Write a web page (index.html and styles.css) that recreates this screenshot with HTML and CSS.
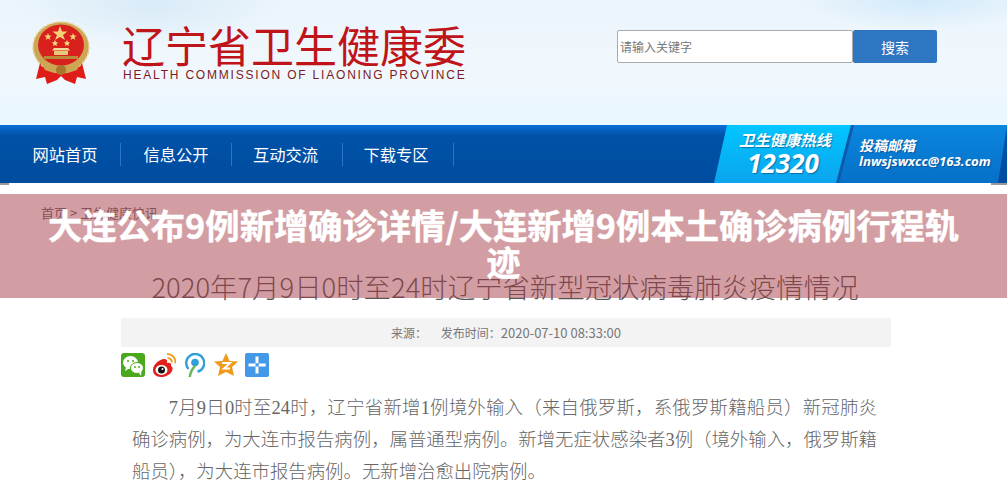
FILE: index.html
```html
<!DOCTYPE html>
<html lang="zh-CN">
<head>
    <meta charset="UTF-8">
    <title>2020年7月9日0时至24时辽宁省新型冠状病毒肺炎疫情情况</title>
    <link rel="stylesheet" href="styles.css">
</head>
<body>
    <div class="header">
        <svg class="emblem" viewBox="0 0 60 64" width="60" height="64">
            <path d="M9 42 L5 58 L14 56 L16 63 L26 59 L30 55 L34 59 L44 63 L46 56 L55 58 L51 42 Z" fill="#e01c18"/>
            <ellipse cx="30" cy="26" rx="28" ry="25" fill="#cda655"/>
            <ellipse cx="30" cy="26" rx="28" ry="25" fill="none" stroke="#e9d195" stroke-width="1.500" stroke-dasharray="3 2"/>
            <ellipse cx="30" cy="24" rx="23" ry="20.500" fill="#d8201c"/>
            <polygon points="29,5 31,10.500 36.500,10.500 32,14 34,19 29,16 24,19 26,14 21.500,10.500 27,10.500" fill="#f3d27a"/>
            <polygon points="17,12 18,14.500 20.500,14.500 18.500,16.500 19.500,19 17,17.500 14.500,19 15.500,16.500 13.500,14.500 16,14.500" fill="#f3d27a"/>
            <polygon points="42,12 43,14.500 45.500,14.500 43.500,16.500 44.500,19 42,17.500 39.500,19 40.500,16.500 38.500,14.500 41,14.500" fill="#f3d27a"/>
            <polygon points="24,19 25,21 27,21.500 25.500,23 26,25 24,24 22,25 22.500,23 21,21.500 23,21" fill="#f3d27a"/>
            <polygon points="36,19 37,21 39,21.500 37.500,23 38,25 36,24 34,25 34.500,23 33,21.500 35,21" fill="#f3d27a"/>
            <path d="M23 27 H37 L39 29.500 H21 Z" fill="#f0d998"/>
            <rect x="23" y="30" width="14" height="4" fill="#e8c878"/>
            <path d="M13 35 H47 V38 H13 Z" fill="#b98a3a"/>
            <path d="M9 40 Q30 54 51 40 L46 49 Q30 56 14 49 Z" fill="#cda655"/>
            <circle cx="30" cy="49" r="5" fill="#a9762c"/>
        </svg>
        <div class="brand">
            <div class="brand-cn">辽宁省卫生健康委</div>
            <div class="brand-en">HEALTH COMMISSION OF LIAONING PROVINCE</div>
        </div>
        <div class="search">
            <input class="search-input" type="text" placeholder="请输入关键字">
            <button class="search-button">搜索</button>
        </div>
    </div>

    <div class="nav">
        <a class="nav-item">网站首页</a>
        <a class="nav-item">信息公开</a>
        <a class="nav-item">互动交流</a>
        <a class="nav-item">下载专区</a>
        <div class="nav-side">
            <svg class="nav-side-bg" viewBox="0 0 293 58" width="293" height="58">
                <defs>
                    <linearGradient id="cyan" x1="0" y1="0" x2="0" y2="1">
                        <stop offset="0" stop-color="#00c6ff"/>
                        <stop offset="1" stop-color="#0ca4ee"/>
                    </linearGradient>
                    <linearGradient id="blue" x1="0" y1="0" x2="0" y2="1">
                        <stop offset="0" stop-color="#0a86de"/>
                        <stop offset="1" stop-color="#0670c8"/>
                    </linearGradient>
                </defs>
                <polygon points="138,0 293,0 284,58 123,58" fill="url(#blue)"/>
                <polygon points="135,0 140,0 125,58 120,58" fill="#0a5aac"/>
                <polygon points="13,0 137,0 122,58 0,58" fill="url(#cyan)"/>
            </svg>
            <div class="hotline">
                <div class="hotline-label">卫生健康热线</div>
                <div class="hotline-num">12320</div>
            </div>
            <div class="mailbox">
                <div class="mailbox-label">投稿邮箱</div>
                <div class="mailbox-addr">lnwsjswxcc@163.com</div>
            </div>
        </div>
    </div>

    <div class="crumb">首页 &gt; 卫生健康快讯</div>
    <h1 class="title">2020年7月9日0时至24时辽宁省新型冠状病毒肺炎疫情情况</h1>

    <div class="main">
        <div class="info">
            <span class="info-source">来源：</span>
            <span>发布时间：<span class="info-time">2020-07-10 08:33:00</span></span>
        </div>
        <div class="share">
            <svg viewBox="0 0 24 24" width="24" height="24">
                <rect width="24" height="24" rx="3" fill="#4aa81c"/>
                <ellipse cx="9.500" cy="9.500" rx="7.500" ry="6.500" fill="#fff"/>
                <path d="M5 14 L4 18 L9 15 Z" fill="#fff"/>
                <ellipse cx="16" cy="15" rx="6.500" ry="5.500" fill="#fff" stroke="#4aa81c"/>
                <path d="M18 20 L20 23 L20.500 18 Z" fill="#fff"/>
                <circle cx="7" cy="8" r="1" fill="#4aa81c"/>
                <circle cx="12" cy="8" r="1" fill="#4aa81c"/>
                <circle cx="14" cy="14" r=".9" fill="#4aa81c"/>
                <circle cx="18" cy="14" r=".9" fill="#4aa81c"/>
            </svg>
            <svg viewBox="0 0 24 24" width="24" height="24">
                <path d="M1 17 C1 11 8 6 12 6 C15 6 15.500 8 15 10 C18 9 20 11 19 13 C21 14 21 16 20 18 C18 22 13 24 9 24 C4 24 1 21 1 17 Z" fill="#e0201e"/>
                <ellipse cx="9.500" cy="17" rx="6" ry="5" fill="#fff"/>
                <circle cx="9.500" cy="17" r="3.500" fill="#111"/>
                <circle cx="10.500" cy="16" r="1" fill="#fff"/>
                <path d="M15 1 C20 1 24 5 23.500 10.500" fill="none" stroke="#efa020" stroke-width="2"/>
                <path d="M15.500 5 C18 5 20 7 19.800 9.500" fill="none" stroke="#efa020" stroke-width="2"/>
            </svg>
            <svg class="share-narrow" viewBox="0 0 20 24" width="20" height="24">
                <path d="M3.500 16 A9 9 0 1 1 12.500 18.700" fill="none" stroke="#2e9fd8" stroke-width="2.400"/>
                <circle cx="10" cy="9.500" r="3.800" fill="#2e9fd8"/>
                <path d="M9.500 12 C6 15 4 19 3.500 24 H6 C6.500 20 8.500 16 11.500 13 Z" fill="#6fb45a"/>
            </svg>
            <svg viewBox="0 0 24 24" width="24" height="24">
                <polygon points="12,0 15.500,8 24,8.500 18,14 20,23 12,19 4,23 6,14 0,8.500 8.500,8" fill="#ef9a1a"/>
                <path d="M8 10 H16 L10 15.500 H16" fill="none" stroke="#fff" stroke-width="2"/>
            </svg>
            <svg viewBox="0 0 24 24" width="24" height="24">
                <rect width="24" height="24" rx="2" fill="#4398e8"/>
                <rect x="10.500" y="3.500" width="3" height="6.800" fill="#fff"/>
                <rect x="10.500" y="13.500" width="3" height="7" fill="#fff"/>
                <rect x="3.500" y="10.500" width="7" height="3" fill="#fff"/>
                <rect x="13.700" y="10.500" width="7" height="3" fill="#fff"/>
            </svg>
        </div>
        <p class="content">7月9日0时至24时，辽宁省新增1例境外输入（来自俄罗斯，系俄罗斯籍船员）新冠肺炎确诊病例，为大连市报告病例，属普通型病例。新增无症状感染者3例（境外输入，俄罗斯籍船员），为大连市报告病例。无新增治愈出院病例。</p>
    </div>

    <div class="overlay">大连公布9例新增确诊详情/大连新增9例本土确诊病例行程轨迹</div>
</body>
</html>
```

FILE: styles.css
```css
body {
    margin: 0;
    height: 492px;
    overflow: hidden;
    background-color: #fff;
    font-family: "Noto Sans CJK SC", sans-serif;
    color: #666;
}

/* 顶部 */
.header {
    display: flex;
    align-items: flex-start;
    height: 125px;
    box-sizing: border-box;
    padding: 21px 0 0 31px;
    background:
        radial-gradient(ellipse 130px 40px at 150px 5px, #d9ebf8, transparent),
        radial-gradient(ellipse 120px 30px at 920px 0, #d2eafc, transparent),
        linear-gradient(to bottom, #eaf4fb 0%, #f1f8fd 55%, #e9f7fe 100%);
}

.emblem {
    flex-shrink: 0;
}

.brand {
    margin-left: 31px;
    width: 350px;
}

.brand-cn {
    font-size: 43px;
    font-weight: 400;
    line-height: 46px;
    color: #bf1419;
}

.brand-en {
    font-family: "Liberation Sans", sans-serif;
    font-size: 12px;
    line-height: 16px;
    letter-spacing: 1.800px;
    color: #7d1a22;
    white-space: nowrap;
    margin-left: 1px;
}

.search {
    display: flex;
    margin: 9px 0 0 145px;
}

.search-input {
    width: 236px;
    height: 33px;
    box-sizing: border-box;
    padding: 0 2px;
    border: 1px solid #aaa;
    border-radius: 2px;
    background-color: #fff;
    font-family: "Noto Sans CJK SC", sans-serif;
    font-size: 12px;
}

.search-input::placeholder {
    color: #777;
    opacity: 1;
}

.search-button {
    width: 84px;
    height: 33px;
    border: none;
    border-radius: 2px;
    background-color: #2e75c2;
    color: #fff;
    font-family: "Noto Sans CJK SC", sans-serif;
    font-size: 14px;
}

/* 导航 */
.nav {
    position: relative;
    display: flex;
    align-items: center;
    height: 58px;
    padding-left: 10px;
    background: linear-gradient(to bottom, #0b6fd6 0%, #0052a8 18%, #004c9f 100%);
}

/* 导航下方的折角 */
.nav::before,
.nav::after {
    content: "";
    position: absolute;
    top: 58px;
    height: 2px;
    background-color: #9a9a9a;
}

.nav::before {
    left: 0;
    width: 9px;
}

.nav::after {
    right: 0;
    width: 16px;
}

.nav-item {
    width: 110px;
    height: 23px;
    border-right: 1px solid #2a73d2;
    text-align: center;
    font-size: 16.300px;
    line-height: 23px;
    color: #fff;
}

.nav-item:nth-child(3) {
    text-indent: -3px;
}

.nav-item:nth-child(4) {
    text-indent: -4px;
}

.nav-side {
    position: absolute;
    top: 0;
    left: 714px;
    display: flex;
    width: 293px;
    height: 58px;
    color: #fff;
    font-style: italic;
    font-weight: 700;
    text-shadow: 1px 1px 1px rgba(0, 50, 110, 0.5);
}

.nav-side-bg {
    position: absolute;
    top: 0;
    left: 0;
}

.hotline {
    position: relative;
    width: 142px;
    text-align: center;
}

.hotline-label {
    margin-top: 5px;
    font-size: 15.300px;
    line-height: 18px;
}

.hotline-num {
    padding-right: 4px;
    font-family: "Open Sans", sans-serif;
    font-size: 26px;
    line-height: 30px;
}

.mailbox {
    position: relative;
    padding: 11px 0 0 3px;
}

.mailbox-label {
    font-size: 14px;
    line-height: 18px;
}

.mailbox-addr {
    font-family: "Open Sans", sans-serif;
    font-size: 13.200px;
    line-height: 15px;
    white-space: nowrap;
}

/* 正文 */
.crumb {
    margin: 21px 0 0 41px;
    font-size: 13px;
    line-height: 18px;
    color: #666;
}

.title {
    margin: 44px 0 0;
    padding-left: 3px;
    text-align: center;
    font-size: 27.400px;
    font-weight: 300;
    line-height: 40px;
    color: #555;
}

.main {
    width: 770px;
    margin: 12px 0 0 121px;
}

.info {
    height: 29px;
    background-color: #f3f3f3;
    text-align: center;
    font-size: 12px;
    line-height: 29px;
    color: #777;
}

.info-source {
    margin-right: 11px;
}

.info-time {
    font-size: 13px;
}

.share {
    display: flex;
    align-items: center;
    gap: 7px;
    margin-top: 6px;
}

.share-narrow {
    margin: 0 2px;
}

.content {
    width: 745px;
    margin: 15px 0 0 11px;
    font-family: "Liberation Serif", "Noto Sans CJK SC", serif;
    font-size: 18.400px;
    font-weight: 300;
    line-height: 32px;
    text-indent: 2em;
    text-align: justify;
    color: #666;
}

/* 浮层标题 */
.overlay {
    position: absolute;
    top: 194px;
    left: 0;
    width: 100%;
    height: 104px;
    box-sizing: border-box;
    padding: 12px 40px 0;
    background-color: rgba(167, 61, 71, 0.5);
    text-align: center;
    font-size: 34.300px;
    font-weight: 700;
    line-height: 37px;
    color: #fff;
    -webkit-text-stroke: 0.4px #fff;
}
```
